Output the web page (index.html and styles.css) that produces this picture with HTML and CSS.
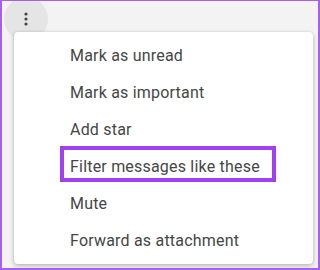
FILE: index.html
```html
<!DOCTYPE html>
<html lang="en">
<head>
	<meta charset="utf-8" />
	<title>Message menu</title>
	<link rel="stylesheet" href="styles.css">
</head>
<body>
<div class="frame">
  <div class="more">
    <svg width="4" height="14" viewBox="0 0 4 14"><circle cx="2" cy="2" r="1.6" fill="#444"/><circle cx="2" cy="7" r="1.6" fill="#444"/><circle cx="2" cy="12" r="1.6" fill="#444"/></svg>
  </div>
  <ul class="menu">
    <li class="item">Mark as unread</li>
    <li class="item">Mark as important</li>
    <li class="item">Add star</li>
    <li class="item marked">Filter messages like these</li>
    <li class="item">Mute</li>
    <li class="item">Forward as attachment</li>
  </ul>
</div>
</body>
</html>
```

FILE: styles.css
```css
body {
  margin: 0;
  font-family: Roboto, "Liberation Sans", sans-serif;
}

.frame {
  width: 320px;
  height: 270px;
  box-sizing: border-box;
  border: 2px solid #a75ef2;
  border-top-width: 1px;
  background: #f3f3f3;
  overflow: hidden;
}

.more {
  width: 44px;
  height: 44px;
  margin: -4px 0 0 2px;
  border-radius: 50%;
  background: #e5e5e5;
  display: flex;
  align-items: center;
  justify-content: center;
}

.menu {
  position: relative;
  list-style: none;
  margin: -9px 0 0 12px;
  padding: 5px 0;
  width: 299px;
  background: #fff;
  border-radius: 4px;
  box-shadow: 0 2px 5px rgba(0,0,0,.22), 0 0 3px rgba(0,0,0,.1);
}

.item {
  height: 37px;
  line-height: 37px;
  padding-left: 56px;
  font-size: 16px;
  letter-spacing: 0.2px;
  color: #444746;
}

.marked {
  position: relative;
}

/* annotation box */
.marked:after {
  content: "";
  position: absolute;
  top: -2px;
  bottom: 3px;
  left: 46px;
  right: 37px;
  border: 4px solid #a23ff0;
}
```
